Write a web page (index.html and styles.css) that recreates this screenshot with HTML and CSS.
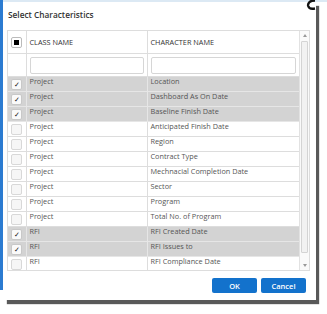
FILE: index.html
```html
<!DOCTYPE html>
<html lang="en">
<head>
    <meta charset="UTF-8">
    <meta name="viewport" content="width=device-width, initial-scale=1.0">
    <title>Select Characteristics</title>
    <link rel="stylesheet" href="styles.css">
</head>
<body>
    <div class="dialog">
        <svg class="close" width="12" height="10" viewBox="0 0 12 10">
            <path d="M10 0.5 C5 0.5 2.5 3 3.2 6 C4 8.8 7.5 9 10 8.5" fill="none" stroke="#111" stroke-width="2.4"/>
        </svg>
        <h1 class="title">Select Characteristics</h1>

        <div class="grid">
            <div class="grid-body">
                <table>
                    <colgroup>
                        <col class="col-chk">
                        <col class="col-class">
                        <col>
                    </colgroup>
                    <thead>
                        <tr class="head">
                            <th class="chk"><span class="box partial"></span></th>
                            <th>CLASS NAME</th>
                            <th>CHARACTER NAME</th>
                        </tr>
                        <tr class="filter">
                            <th class="chk"></th>
                            <th><input type="text"></th>
                            <th><input type="text"></th>
                        </tr>
                    </thead>
                    <tbody>
                        <tr class="sel"><td class="chk"><span class="box on">&#10003;</span></td><td>Project</td><td>Location</td></tr>
                        <tr class="sel"><td class="chk"><span class="box on">&#10003;</span></td><td>Project</td><td>Dashboard As On Date</td></tr>
                        <tr class="sel"><td class="chk"><span class="box on">&#10003;</span></td><td>Project</td><td>Baseline Finish Date</td></tr>
                        <tr><td class="chk"><span class="box"></span></td><td>Project</td><td>Anticipated Finish Date</td></tr>
                        <tr><td class="chk"><span class="box"></span></td><td>Project</td><td>Region</td></tr>
                        <tr><td class="chk"><span class="box"></span></td><td>Project</td><td>Contract Type</td></tr>
                        <tr><td class="chk"><span class="box"></span></td><td>Project</td><td>Mechnacial Completion Date</td></tr>
                        <tr><td class="chk"><span class="box"></span></td><td>Project</td><td>Sector</td></tr>
                        <tr><td class="chk"><span class="box"></span></td><td>Project</td><td>Program</td></tr>
                        <tr><td class="chk"><span class="box"></span></td><td>Project</td><td>Total No. of Program</td></tr>
                        <tr class="sel"><td class="chk"><span class="box on">&#10003;</span></td><td>RFI</td><td>RFI Created Date</td></tr>
                        <tr class="sel"><td class="chk"><span class="box on">&#10003;</span></td><td>RFI</td><td>RFI Issues to</td></tr>
                        <tr><td class="chk"><span class="box"></span></td><td>RFI</td><td>RFI Compliance Date</td></tr>
                    </tbody>
                </table>
            </div>
            <div class="scrollbar">
                <span class="arrow up"></span>
                <div class="track"><span class="thumb"></span></div>
                <span class="arrow down"></span>
            </div>
        </div>

        <div class="actions">
            <button class="btn">OK</button>
            <button class="btn">Cancel</button>
        </div>
    </div>
</body>
</html>
```

FILE: styles.css
```css
html, body {
    margin: 0;
    height: 100%;
}
body {
    font-family: "Open Sans", "Noto Sans", sans-serif;
    color: #555;
    background:
        linear-gradient(#2b7bd1, #2b7bd1) 0 0 / 3px 290px no-repeat,
        linear-gradient(#dce9f4, #dce9f4) 0 0 / 100% 2px no-repeat,
        #fff;
    padding: 2px 0 0 4px;
    box-sizing: border-box;
}
.dialog {
    position: relative;
    width: 312px;
    height: 298px;
    background: #fff;
    box-shadow: 3px 4px 1px rgba(0, 0, 0, 0.65);
    padding: 0 6px 0 3px;
    box-sizing: border-box;
    display: flex;
    flex-direction: column;
}
.close {
    position: absolute;
    right: -1px;
    top: -2px;
}
.title {
    margin: 0;
    padding: 7px 0 0 1px;
    height: 28px;
    box-sizing: border-box;
    font-size: 8.3px;
    line-height: 11px;
    font-weight: 600;
    color: #333;
}
.grid {
    display: flex;
    border: 1px solid #ddd;
    height: 241px;
    box-sizing: border-box;
}
.grid-body {
    flex: 1;
    overflow: hidden;
}
table {
    width: 100%;
    border-collapse: collapse;
    table-layout: fixed;
    font-size: 7.3px;
}
.col-chk {
    width: 18px;
}
.col-class {
    width: 121px;
}
th, td {
    border-right: 1px solid #ddd;
    border-bottom: 1px solid #ddd;
    text-align: left;
    padding: 0 3px;
    white-space: nowrap;
    overflow: hidden;
}
th:last-child, td:last-child {
    border-right: 0;
}
.head th {
    height: 22px;
    font-weight: 400;
    color: #333;
}
.filter th {
    height: 22px;
    padding: 0 3px;
}
.filter input {
    display: block;
    width: 100%;
    height: 17px;
    box-sizing: border-box;
    border: 1px solid #d6d6d6;
    border-radius: 2px;
    margin: 0;
}
td {
    height: 14px;
    vertical-align: top;
    line-height: 9px;
    padding-top: 0;
}
tr.sel td {
    background: #d3d3d3;
    border-color: #e6e6e6;
}
.chk {
    text-align: center;
    padding: 0;
}
td.chk {
    vertical-align: middle;
    line-height: 0;
}
.box {
    display: inline-block;
    width: 9px;
    height: 9px;
    border: 1px solid #d8d8d8;
    border-radius: 2px;
    background: #f6f6f6;
    vertical-align: middle;
    box-sizing: content-box;
    font-size: 7px;
    line-height: 9px;
    color: #111;
    text-align: center;
}
.box.on {
    background: #fafafa;
    border-color: #c8c8c8;
}
.box.partial {
    background: #fff;
    border-color: #bbb;
    position: relative;
}
.box.partial::after {
    content: "";
    position: absolute;
    left: 2px;
    top: 2px;
    width: 5px;
    height: 5px;
    background: #000;
}
.scrollbar {
    width: 9px;
    border-left: 1px solid #e2e2e2;
    background: #fafafa;
    display: flex;
    flex-direction: column;
}
.arrow {
    height: 9px;
    display: flex;
    align-items: center;
    justify-content: center;
}
.arrow::before {
    content: "";
    border-left: 2.5px solid transparent;
    border-right: 2.5px solid transparent;
}
.arrow.up::before {
    border-bottom: 3px solid #999;
}
.arrow.down::before {
    border-top: 3px solid #999;
}
.track {
    flex: 1;
    padding: 1px 1px 8px;
}
.thumb {
    display: block;
    height: 100%;
    box-sizing: border-box;
    background: #f2f2f2;
    border: 1px solid #d4d4d4;
    border-radius: 1px;
}
.actions {
    display: flex;
    justify-content: flex-end;
    gap: 4px;
    padding: 7px 4px 0 0;
}
.btn {
    width: 45px;
    height: 15px;
    border: 0;
    border-radius: 2px;
    background: #1372cc;
    color: #fff;
    font-family: "Open Sans", "Noto Sans", sans-serif;
    font-size: 7.5px;
    font-weight: 600;
    padding: 0;
}
```
